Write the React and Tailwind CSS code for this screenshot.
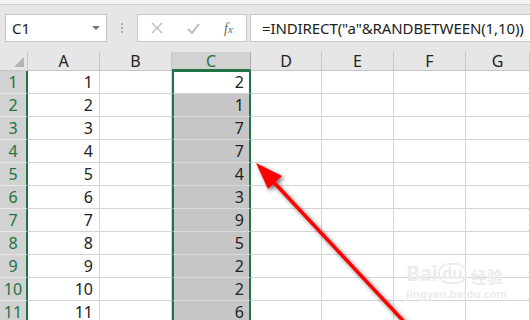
import React from 'react';

const cols = ['A', 'B', 'C', 'D', 'E', 'F', 'G'];
const colA = [1, 2, 3, 4, 5, 6, 7, 8, 9, 10, 11];
const colC = [2, 1, 7, 7, 4, 3, 9, 5, 2, 2, 6];

const font = { fontFamily: '"Noto Sans", "Liberation Sans", sans-serif' };

const Toolbar = () => (
  <div className="h-[52px] bg-[#e6e6e6] border-t-[4px] border-[#f3f3f3] relative">
    <div className="absolute left-0 right-0 top-0 h-px bg-[#d0d0d0]" />
    <div className="flex items-center pt-[10px] pl-[5px]">
      {/* name box */}
      <div className="w-[102px] h-[28px] bg-white border border-[#c6c6c6] flex items-center justify-between pl-[6px] pr-[6px]">
        <span className="text-[15px] text-[#222]">C1</span>
        <span className="w-0 h-0 border-l-[4px] border-r-[4px] border-t-[4px] border-l-transparent border-r-transparent border-t-[#777]" />
      </div>
      {/* grip dots */}
      <div className="w-[30px] flex flex-col items-center gap-[2px]">
        <span className="w-[2px] h-[2px] bg-[#aaa]" />
        <span className="w-[2px] h-[2px] bg-[#aaa]" />
        <span className="w-[2px] h-[2px] bg-[#aaa]" />
      </div>
      {/* buttons */}
      <div className="w-[110px] h-[28px] bg-white border border-[#c6c6c6] flex items-center">
        <svg width="12" height="12" viewBox="0 0 12 12" className="ml-[13px]">
          <path d="M1 1 L11 11 M11 1 L1 11" stroke="#bdbdbd" strokeWidth="1.4" fill="none" />
        </svg>
        <svg width="13" height="11" viewBox="0 0 13 11" className="ml-[24px]">
          <path d="M1 6 L5 10 L12 1" stroke="#bdbdbd" strokeWidth="2" fill="none" />
        </svg>
        <span className="ml-[24px] text-[14px] italic text-[#666]" style={{ fontFamily: '"Liberation Serif", serif' }}>
          f<span className="text-[11px]">x</span>
        </span>
      </div>
      {/* formula input */}
      <div className="ml-[3px] flex-1 h-[28px] bg-white border border-[#c6c6c6] border-r-0 flex items-center pl-[11px]">
        <span className="text-[15px] text-[#222] whitespace-nowrap tracking-[-0.1px]">=INDIRECT("a"&RANDBETWEEN(1,10))</span>
      </div>
    </div>
  </div>
);

const Grid = () => (
  <div className="grid grid-cols-[28px_72px_72px_79px_71px_72px_72px_64px] bg-white">
    {/* header row */}
    <div className="h-[19px] bg-[#e6e6e6] border-r border-b border-[#c6c6c6] relative">
      <span className="absolute right-[3px] bottom-[3px] w-0 h-0 border-l-[10px] border-t-[10px] border-l-transparent border-t-transparent border-b-[10px] border-b-[#b4b4b4]" style={{ borderRightWidth: 0 }} />
    </div>
    {cols.map((c) =>
      c === 'C' ? (
        <div key={c} className="h-[19px] bg-[#d2d2d2] border-r border-[#ababab] border-b-2 border-b-[#217346] flex items-center justify-center text-[16px] text-[#217346]">
          {c}
        </div>
      ) : (
        <div key={c} className="h-[19px] bg-[#e6e6e6] border-r border-b border-[#c6c6c6] flex items-center justify-center text-[16px] text-[#222]">
          {c}
        </div>
      )
    )}
    {colA.map((n, i) => (
      <React.Fragment key={n}>
        <div className="h-[23px] bg-[#d2d2d2] border-r-2 border-r-[#217346] border-b border-b-[#e6e6e6] flex items-center justify-center text-[16px] text-[#217346]">
          {n}
        </div>
        <div className="h-[23px] border-r border-b border-[#d4d4d4] flex items-center justify-end pr-[6px] text-[16px] text-[#222]">
          {n}
        </div>
        <div className="h-[23px] border-r border-b border-[#d4d4d4]" />
        <div
          className={
            i === 0
              ? 'h-[23px] bg-white border-x-2 border-[#217346] border-b border-b-[#d4d4d4] flex items-center justify-end pr-[5px] text-[16px] text-[#222]'
              : 'h-[23px] bg-[#c6c6c6] border-x-2 border-[#217346] border-b border-b-[#d9d9d9] flex items-center justify-end pr-[5px] text-[16px] text-[#222]'
          }
        >
          {colC[i]}
        </div>
        <div className="h-[23px] border-r border-b border-[#d4d4d4]" />
        <div className="h-[23px] border-r border-b border-[#d4d4d4]" />
        <div className="h-[23px] border-r border-b border-[#d4d4d4]" />
        <div className="h-[23px] border-r border-b border-[#d4d4d4]" />
      </React.Fragment>
    ))}
  </div>
);

export default function App() {
  return (
    <div className="w-[530px] h-[320px] overflow-hidden relative bg-white" style={font}>
      <Toolbar />
      <Grid />
      {/* top border of selection */}
      <div className="absolute left-[172px] top-[70px] w-[79px] h-[2px] bg-[#217346]" />

      {/* watermark */}
      <div className="absolute left-[406px] top-[263px] text-[#ececec] leading-none select-none">
        <div className="flex items-end gap-[1px]">
          <span className="text-[21px] font-bold tracking-tight">Bai</span>
          <span className="text-[16px] font-bold rounded-full border-2 border-[#ececec] px-[2px] leading-[17px]">du</span>
          <span className="text-[16px] font-bold ml-[3px]" style={{ fontFamily: '"Noto Sans CJK SC", sans-serif' }}>经验</span>
        </div>
        <div className="text-[11px] font-bold mt-[4px]">jingyan.baidu.com</div>
      </div>

      {/* red arrow */}
      <svg className="absolute left-0 top-0" width="530" height="320" viewBox="0 0 530 320">
        <defs>
          <filter id="sh" x="-20%" y="-20%" width="140%" height="140%">
            <feGaussianBlur in="SourceAlpha" stdDeviation="2" />
            <feOffset dx="2" dy="2" result="b" />
            <feComponentTransfer>
              <feFuncA type="linear" slope="0.55" />
            </feComponentTransfer>
            <feMerge>
              <feMergeNode />
              <feMergeNode in="SourceGraphic" />
            </feMerge>
          </filter>
        </defs>
        <g filter="url(#sh)">
          <line x1="268" y1="176" x2="408" y2="326" stroke="#ff0000" strokeWidth="3.5" />
          <polygon points="256,163 282,176 268,189" fill="#ff0000" />
        </g>
      </svg>
    </div>
  );
}
